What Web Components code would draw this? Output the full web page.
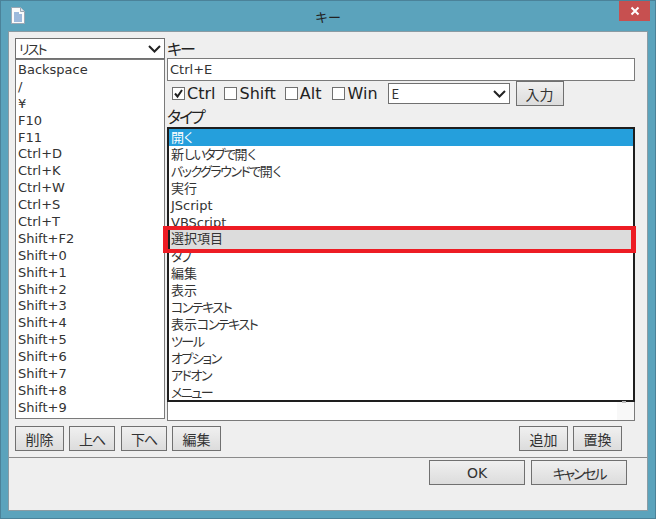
<!DOCTYPE html>
<html lang="ja"><head><meta charset="utf-8"><style>
html,body{margin:0;padding:0;width:656px;height:519px;overflow:hidden;background:#5ba3bc}
body{font-family:"DejaVu Sans","Noto Sans CJK JP",sans-serif;color:#1a1a1a}
</style></head><body>
<key-dialog></key-dialog>
<template id="t-dialog"><style>
:host{display:flex;flex-direction:column;box-sizing:border-box;width:656px;height:519px;background:#5ba3bc;border:1px solid #4b8299;padding:0 7px 7px}
.title{height:30px;flex:none;display:flex;align-items:flex-start;position:relative}
.icon{margin:6px 0 0 3px}
.cap{position:absolute;left:0;right:0;top:8px;text-align:center;font-size:13px;line-height:16px;color:#222;font-family:"Noto Sans CJK JP",sans-serif}
.close{position:absolute;right:-2px;top:0;width:31px;height:20px;background:#c75050;display:flex;align-items:center;justify-content:center}
.client{flex:1;background:#efefef;border:1px solid #8a9ba3;display:flex;flex-direction:column;min-height:0}
.top{height:426px;flex:none;box-sizing:border-box;border-bottom:1px solid #8a8a8a;padding:6px 0 0 6px;display:grid;grid-template-columns:150px 468px;column-gap:2px;grid-template-rows:388px 25px}
.left{display:flex;flex-direction:column}
.right{display:flex;flex-direction:column;position:relative}
.lab{font-size:16px;line-height:20px;height:20px;font-family:"Noto Sans CJK JP",sans-serif;font-feature-settings:"palt";color:#222}
.row{display:flex;align-items:center;height:25px;padding-left:5px}
.btns{grid-column:1/3;display:flex;align-items:flex-start}
.spacer{flex:1}
.bottom{flex:1;display:flex;justify-content:flex-end;align-items:flex-start;padding:2px 20px 0 0;gap:6px}
.input{box-sizing:border-box;height:23px;background:#fff;border:1px solid #7a7a7a;font-size:13px;line-height:21px;padding-left:2px;color:#333}
</style>
<div class="title">
<svg class="icon" width="14" height="17" viewBox="0 0 14 17"><path d="M.5.5h9l4 4v12H.5z" fill="#fbfbfb" stroke="#9aa7b3"/><path d="M9.5.5v4h4" fill="#dfe6ee" stroke="#9aa7b3"/><path d="M3 6h5M3 8h8M3 10h8M3 12h8M3 14h8" stroke="#3f78bd"/></svg>
<span class="cap">キー</span>
<span class="close"><svg width="10" height="10" viewBox="0 0 10 10"><path d="M1.5 1.5l7 7M8.5 1.5l-7 7" stroke="#fff" stroke-width="2"/></svg></span>
</div>
<div class="client">
<div class="top">
<div class="left">
<win-combo style="--w:150px;--h:21px" label="リスト"></win-combo>
<win-list id="keys"></win-list>
</div>
<div class="right">
<div class="lab" style="letter-spacing:-2px">キー</div>
<div class="input">Ctrl+E</div>
<div class="row">
<win-check checked style="margin-right:9px">Ctrl</win-check>
<win-check style="margin-right:9px">Shift</win-check>
<win-check style="margin-right:10px">Alt</win-check>
<win-check style="margin-right:10px;--gap:3px">Win</win-check>
<win-combo style="--w:122px;--h:21px" label="E"></win-combo>
<win-btn style="--w:48px;--h:25px;margin-left:6px">入力</win-btn>
</div>
<div class="lab" style="height:21px;letter-spacing:-2px">タイプ</div>
<type-list></type-list>
</div>
<div class="btns">
<win-btn style="--w:49px;margin-right:5px">削除</win-btn>
<win-btn style="--w:46px;margin-right:6px;letter-spacing:-1px">上へ</win-btn>
<win-btn style="--w:46px;margin-right:5px;letter-spacing:-1px">下へ</win-btn>
<win-btn style="--w:49px">編集</win-btn>
<span class="spacer"></span>
<win-btn style="--w:49px;margin-right:5px">追加</win-btn>
<win-btn style="--w:49px;margin-right:13px">置換</win-btn>
</div>
</div>
<div class="bottom">
<win-btn style="--w:96px;--h:25px">OK</win-btn>
<win-btn style="--w:96px;--h:25px;letter-spacing:-2.2px">キャンセル</win-btn>
</div>
</div>
</template>
<script>
function shadow(el,html){el.attachShadow({mode:'open'}).innerHTML=html}
customElements.define('win-btn',class extends HTMLElement{constructor(){super();shadow(this,`<style>
:host{display:inline-flex;flex:none;box-sizing:border-box;width:var(--w,49px);height:var(--h,25px);border:1px solid #707070;background:linear-gradient(#f0f0f0,#dcdcdc);align-items:center;justify-content:center;font-size:14px;color:#333;font-family:"DejaVu Sans","Noto Sans CJK JP",sans-serif;font-feature-settings:"palt"}
</style><slot></slot>`)}});
customElements.define('win-check',class extends HTMLElement{constructor(){super();const c=this.hasAttribute('checked');shadow(this,`<style>
:host{display:inline-flex;align-items:center;font-size:16px;line-height:20px;color:#222}
.b{box-sizing:border-box;width:13px;height:13px;border:1px solid #707070;background:#fff;margin-right:var(--gap,2px);display:block}
</style><svg class="b" viewBox="0 0 11 11"></svg><slot></slot>`);
if(c)this.shadowRoot.querySelector('svg').innerHTML='<path d="M2 5.5l2.5 3L9 2" fill="none" stroke="#222" stroke-width="2"/>'}});
customElements.define('win-combo',class extends HTMLElement{constructor(){super();shadow(this,`<style>
:host{display:flex;flex:none;box-sizing:border-box;width:var(--w);height:var(--h);background:#fff;border:1px solid #707070;align-items:center;font-size:13px;padding-left:3px;color:#333;font-family:"Noto Sans CJK JP",sans-serif;font-feature-settings:"palt"}
span{letter-spacing:-2px}
svg{margin-left:auto;margin-right:3px}
</style><span>${this.getAttribute('label')}</span><svg width="13" height="8" viewBox="0 0 13 8"><path d="M1 1l5.5 5.5L12 1" fill="none" stroke="#222" stroke-width="2"/></svg>`)}});
customElements.define('win-list',class extends HTMLElement{constructor(){super();
const items=['Backspace','/','¥','F10','F11','Ctrl+D','Ctrl+K','Ctrl+W','Ctrl+S','Ctrl+T','Shift+F2','Shift+0','Shift+1','Shift+2','Shift+3','Shift+4','Shift+5','Shift+6','Shift+7','Shift+8','Shift+9'];
shadow(this,`<style>
:host{display:block;box-sizing:border-box;width:150px;height:360px;background:#fff;border:1px solid #7a7a7a;padding:2px 0 0 2px;font-size:13px;color:#333}
div{height:16.9px;line-height:16.9px;white-space:nowrap}
</style>`+items.map(i=>`<div>${i}</div>`).join(''))}});
customElements.define('type-list',class extends HTMLElement{constructor(){super();
const items=['開く','新しいタブで開く','バックグラウンドで開く','実行','JScript','VBScript','選択項目','タブ','編集','表示','コンテキスト','表示コンテキスト','ツール','オプション','アドオン','メニュー'];
const kana=t=>t.replace(/[\u3040-\u30ff]+/g,m=>`<span class="k">${m}</span>`);
shadow(this,`<style>
:host{display:block;box-sizing:border-box;width:468px;height:294px;background:#fff;border:1px solid #7a7a7a;border-top:0;position:relative;font-size:13px;color:#333;font-family:"DejaVu Sans","Noto Sans CJK JP",sans-serif;font-feature-settings:"palt"}
.f{box-sizing:border-box;height:275px;border:2px solid #1e1e1e;overflow:hidden;margin:0 0 0 -1px;width:468px}
.i{height:17px;line-height:17px;padding-left:2px;white-space:nowrap}
.i.s{background:#259fdc;color:#fff}
.k{letter-spacing:-1.5px}
.hl{position:absolute;left:-5px;right:-2px;top:99px;height:27px;box-sizing:border-box;border:solid #ed1c24;border-width:4px 5px;background:#dcdcdc;line-height:18px}
.hl span{display:block;border-left:2px solid #1e1e1e;padding-left:1px;height:19px}
.corner{position:absolute;right:0;bottom:0;width:17px;height:18px;background:#f8f8f8}
.dot{position:absolute;right:8px;bottom:17px;width:4px;height:2px;background:#bbb}
</style><div class="f">`+items.map((t,i)=>`<div class="i${i==0?' s':''}">${kana(t)}</div>`).join('')+`</div><div class="hl"><span>選択項目</span></div><div class="corner"></div><div class="dot"></div>`)}});
customElements.define('key-dialog',class extends HTMLElement{constructor(){super();
this.attachShadow({mode:'open'}).appendChild(document.getElementById('t-dialog').content.cloneNode(true))}});
</script>
</body></html>
